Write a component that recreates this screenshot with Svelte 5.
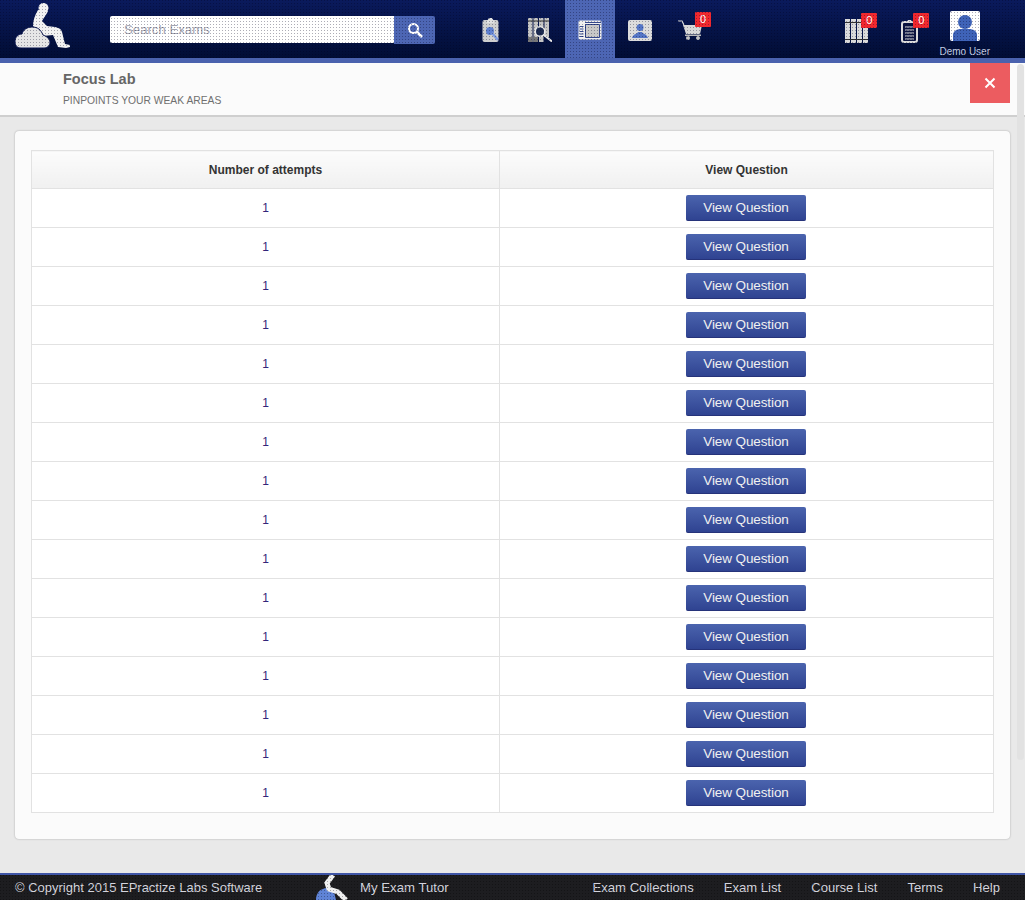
<script>
	const rows = Array.from({length: 16}, () => 1)
	const links = ["Exam Collections", "Exam List", "Course List", "Terms", "Help"]
</script>

<div class="page">
	<header class="topbar">
		<a class="logo" href="#top" aria-label="My Exam Tutor">
			<svg width="60" height="52" viewBox="10 0 60 52">
				<circle cx="43.500" cy="8" r="5" fill="#f2f2f2"/>
				<path fill="#f2f2f2" d="M38 10C35 15 33 20 33 26L43 36 53 35 58 47 66 48 70 47 70 45 65 44 62 32C61 28 58 28 55 27L47 26 42 21C44 17 47 14 48 11z"/>
				<path fill="#e6e6e6" stroke="#0a1650" stroke-width="1" d="M15 42c0-5 3-8 7-8 1-4 5-7 10-7 6 0 9 3 11 8 3 1 7 4 7 7 0 4-3 6-6 6H21c-4 0-6-3-6-6z"/>
			</svg>
		</a>
		<form class="search">
			<input type="text" placeholder="Search Exams" />
			<button type="button" aria-label="Search">
				<svg width="16" height="16" viewBox="0 0 16 16" fill="none" stroke="#fff">
					<circle cx="6.500" cy="6.500" r="4.500" stroke-width="2"/>
					<path d="M10 10l5 5" stroke-width="2.500"/>
				</svg>
			</button>
		</form>
		<nav class="mainnav">
			<a href="#a" class="navitem" aria-label="Exams">
				<svg width="17" height="24" viewBox="0 0 17 24">
					<rect x="0.500" y="2" width="16" height="22" rx="2" fill="#cfcfcf"/>
					<path d="M5 3l2-3h3l2 3v2H5z" fill="#e2e2e2"/>
					<circle cx="8" cy="13" r="4" fill="#5f80d0"/>
					<path d="M10 15l6 7" stroke="#7d9ae0" stroke-width="2.500"/>
				</svg>
			</a>
			<a href="#b" class="navitem" aria-label="Collections">
				<svg width="24" height="24" viewBox="0 0 24 24">
					<g fill="#c4c4c4">
						<rect x="0" y="0" width="4.500" height="24"/>
						<rect x="5.500" y="0" width="4.500" height="24"/>
						<rect x="11" y="0" width="4.500" height="24"/>
						<rect x="16.500" y="0" width="4.500" height="19"/>
					</g>
					<path d="M0 19h4.500v5H0zM5.500 19H10v5H5.500z" fill="#777"/>
					<path d="M0 3h21" stroke="#333"/>
					<circle cx="12" cy="13.500" r="4.800" fill="#1c2a50" stroke="#e8e8e8" stroke-width="1.600"/>
					<path d="M16 17l8 6.500" stroke="#e8e8e8" stroke-width="2"/>
				</svg>
			</a>
			<a href="#c" class="navitem active" aria-label="Focus Lab">
				<svg width="24" height="20" viewBox="0 0 24 20">
					<rect x="0.500" y="0.500" width="23" height="19" rx="1.500" fill="#f0f0f0"/>
					<path d="M7.500 4.500h14v13h-14z" fill="#c8c8c8" stroke="#35488c"/>
					<path d="M7 2.500h16M1.500 6.500h4M1.500 9h4M1.500 11.500h4M1.500 14h4M1.500 16.500h4" stroke="#35488c"/>
				</svg>
			</a>
			<a href="#d" class="navitem" aria-label="Profile">
				<svg width="24" height="21" viewBox="0 0 24 21">
					<rect width="24" height="21" rx="2" fill="#dcdcdc"/>
					<circle cx="12" cy="7.500" r="3.500" fill="#5576c6"/>
					<path d="M4 18c1-4 5-4 6-6h4c1 2 5 2 6 6z" fill="#5576c6"/>
				</svg>
			</a>
			<a href="#e" class="navitem" aria-label="Cart">
				<svg width="24" height="20" viewBox="0 0 24 20">
					<path d="M0 1h4l2 4" fill="none" stroke="#e0e0e0" stroke-width="1.200"/>
					<path d="M5 5h19l-2 9H8z" fill="#d8d8d8"/>
					<rect x="7" y="14.500" width="16" height="1.500" fill="#bbb"/>
					<circle cx="10" cy="18" r="2" fill="#c4c4c4"/>
					<circle cx="20" cy="18" r="2" fill="#c4c4c4"/>
				</svg>
				<span class="badge">0</span>
			</a>
		</nav>
		<div class="usernav">
			<a href="#f" class="useritem" aria-label="My collections">
				<svg width="24" height="24" viewBox="0 0 24 24">
					<g fill="#dadada">
						<rect x="0" y="0" width="5" height="24"/>
						<rect x="6" y="0" width="5" height="24"/>
						<rect x="12" y="0" width="5" height="24"/>
						<rect x="18" y="0" width="5" height="24"/>
					</g>
					<path d="M0 3.500h23M0 20.500h23" stroke="#333"/>
				</svg>
				<span class="badge">0</span>
			</a>
			<a href="#g" class="useritem clip" aria-label="My exams">
				<svg width="17" height="24" viewBox="0 0 17 24">
					<rect x="1" y="3" width="15" height="20" rx="2" fill="#0b1440" stroke="#dcdcdc" stroke-width="2"/>
					<path d="M6 3l1-2h3l1 2z" fill="#dcdcdc"/>
					<path d="M4 8h9M4 11h9M4 14h9M4 17h9M4 20h9" stroke="#dcdcdc"/>
				</svg>
				<span class="badge">0</span>
			</a>
			<a href="#h" class="user">
				<svg width="30" height="30" viewBox="0 0 30 30">
					<rect width="30" height="30" rx="2" fill="#fff"/>
					<circle cx="15" cy="11" r="7" fill="#3f63b8"/>
					<path d="M3 30v-6c0-4 4-6 8-6h8c4 0 8 2 8 6v6z" fill="#3f63b8"/>
				</svg>
				<span>Demo User</span>
			</a>
		</div>
		<div class="dots"></div>
	</header>

	<section class="subhead">
		<div>
			<h1>Focus Lab</h1>
			<p>PINPOINTS YOUR WEAK AREAS</p>
		</div>
		<button class="close" aria-label="Close">
			<svg width="12" height="12" viewBox="0 0 12 12"><path d="M1.500 1.500l9 9M10.500 1.500l-9 9" stroke="#fff" stroke-width="2"/></svg>
		</button>
	</section>

	<main>
		<div class="card">
			<table>
				<thead>
					<tr>
						<th class="col1">Number of attempts</th>
						<th>View Question</th>
					</tr>
				</thead>
				<tbody>
					{#each rows as n}
						<tr>
							<td>{n}</td>
							<td class="action"><button class="view">View Question</button></td>
						</tr>
					{/each}
				</tbody>
			</table>
		</div>
	</main>

	<footer>
		<span class="copy">© Copyright 2015 EPractize Labs Software</span>
		<span class="brand">
			<svg width="34" height="25" viewBox="0 0 34 25">
				<path fill="#5f83d6" d="M0 25c0-6 3-10 7-11 3-2 8-1 11 3l2 8z"/>
				<path fill="none" stroke="#f0f0f0" stroke-width="5" d="M17 0L11 8 13 14 22 17 30 25"/>
			</svg>
			My Exam Tutor
		</span>
		<nav>
			{#each links as link}
				<a href="#top">{link}</a>
			{/each}
		</nav>
		<div class="dots dark"></div>
	</footer>

	<div class="scrollthumb"></div>
</div>

<style>
	:global(body) {
		margin: 0;
		background: #e9e9e9;
	}
	.page {
		position: relative;
		display: flex;
		flex-direction: column;
		height: 900px;
		overflow: hidden;
		font-family: "Liberation Sans", Arial, sans-serif;
		background: #e9e9e9;
	}
	a {
		text-decoration: none;
	}
	.topbar {
		position: relative;
		display: flex;
		align-items: stretch;
		height: 58px;
		flex: none;
		border-bottom: 5px solid #4a62ae;
		background: linear-gradient(#0a1a5c, #010d34);
	}
	.dots {
		position: absolute;
		inset: 0;
		pointer-events: none;
		background-image: conic-gradient(from 270deg at 1px 1px, rgba(0, 0, 30, 0.32) 25%, transparent 0);
		background-size: 3px 3px;
	}
	.dots.dark {
		background-image: conic-gradient(from 270deg at 1px 1px, rgba(0, 0, 0, 0.3) 25%, transparent 0);
	}
	.logo {
		display: block;
		flex: none;
		width: 110px;
		padding-left: 10px;
		box-sizing: border-box;
	}
	.search {
		display: flex;
		width: 325px;
		height: 28px;
		margin-top: 16px;
	}
	.search input {
		width: 284px;
		height: 27px;
		box-sizing: border-box;
		flex: none;
		border: 0;
		border-radius: 2px 0 0 2px;
		padding: 0 14px;
		background: #fff;
		font: 13.200px "Liberation Sans", Arial, sans-serif;
	}
	.search input::placeholder {
		color: #a4a4b0;
		opacity: 1;
	}
	.search button {
		flex: 1;
		display: flex;
		align-items: center;
		justify-content: center;
		border: 0;
		border-radius: 0 2px 2px 0;
		padding: 0;
		background: #4d66b4;
	}
	.mainnav {
		display: flex;
		margin-left: 30px;
	}
	.navitem {
		position: relative;
		display: flex;
		align-items: center;
		justify-content: center;
		box-sizing: border-box;
		width: 50px;
		padding-top: 2px;
	}
	.navitem.active {
		background: #4d66b4;
	}
	.badge {
		position: absolute;
		top: 12px;
		right: 4px;
		width: 16px;
		height: 15px;
		background: #f0282e;
		border-radius: 1px;
		color: #fff;
		font-size: 11px;
		line-height: 15px;
		text-align: center;
	}
	.usernav {
		display: flex;
		margin-left: auto;
		margin-right: 35px;
	}
	.useritem {
		position: relative;
		display: flex;
		align-items: center;
		justify-content: center;
		box-sizing: border-box;
		width: 53px;
		padding-top: 4px;
	}
	.useritem .badge {
		top: 13px;
		right: 6px;
	}
	.useritem.clip .badge {
		right: 7px;
	}
	.user {
		display: flex;
		flex-direction: column;
		align-items: center;
		margin-left: 3px;
		padding-top: 11px;
		color: #c4cee4;
		font-size: 10px;
		line-height: 12px;
		gap: 5px;
	}
	.subhead {
		position: relative;
		flex: none;
		box-sizing: border-box;
		height: 54px;
		padding: 8px 63px 0;
		background: #fbfbfb;
		border-bottom: 2px solid #cfcfcf;
	}
	h1 {
		margin: 0;
		color: #666;
		font-size: 14.500px;
		line-height: 17px;
	}
	.subhead p {
		margin: 7px 0 0;
		color: #6f6f6f;
		font-size: 10.300px;
		line-height: 12px;
	}
	.close {
		position: absolute;
		top: 0;
		right: 15px;
		display: flex;
		align-items: center;
		justify-content: center;
		width: 40px;
		height: 40px;
		border: 0;
		padding: 0;
		background: #ec5c60;
	}
	main {
		flex: 1;
		padding: 14px 15px 0;
	}
	.card {
		box-sizing: border-box;
		width: 995px;
		height: 708px;
		padding: 19px 16px;
		background: #fbfbfb;
		border-radius: 4px;
		box-shadow: 0 0 2px rgba(0, 0, 0, 0.3);
	}
	table {
		width: 963px;
		table-layout: fixed;
		border-collapse: collapse;
		background: #fff;
	}
	th, td {
		border: 1px solid #e2e2e2;
		padding: 0;
		text-align: center;
	}
	th {
		height: 37px;
		background: linear-gradient(#fcfcfc, #f0f0f0);
		color: #333;
		font-size: 12px;
	}
	.col1 {
		width: 467px;
	}
	td {
		height: 38px;
		color: #33257a;
		font-size: 12px;
	}
	td.action {
		padding-right: 1px;
	}
	.view {
		display: block;
		width: 120px;
		height: 26px;
		margin: 0 auto;
		border: 0;
		border-bottom: 1px solid #26337a;
		border-radius: 2px;
		padding: 0;
		background: linear-gradient(#4b64ae, #2f4391);
		color: #f0f0f0;
		font: 13.500px "Liberation Sans", Arial, sans-serif;
		letter-spacing: -0.1px;
	}
	footer {
		position: relative;
		flex: none;
		display: flex;
		align-items: center;
		box-sizing: border-box;
		height: 27px;
		padding-left: 15px;
		background: #1d1d20;
		border-top: 2px solid #3f55a6;
		color: #d4d4dd;
		font-size: 13px;
	}
	.copy {
		width: 301px;
	}
	.brand {
		display: flex;
		align-items: center;
		gap: 10px;
		font-size: 13.200px;
	}
	footer nav {
		display: flex;
		gap: 30px;
		margin-left: auto;
		margin-right: 25px;
		font-size: 13.100px;
	}
	footer a {
		color: #d4d4dd;
	}
	.scrollthumb {
		position: absolute;
		top: 64px;
		right: 1px;
		width: 7px;
		height: 696px;
		border-radius: 4px;
		background: #e2e2e2;
	}
</style>
